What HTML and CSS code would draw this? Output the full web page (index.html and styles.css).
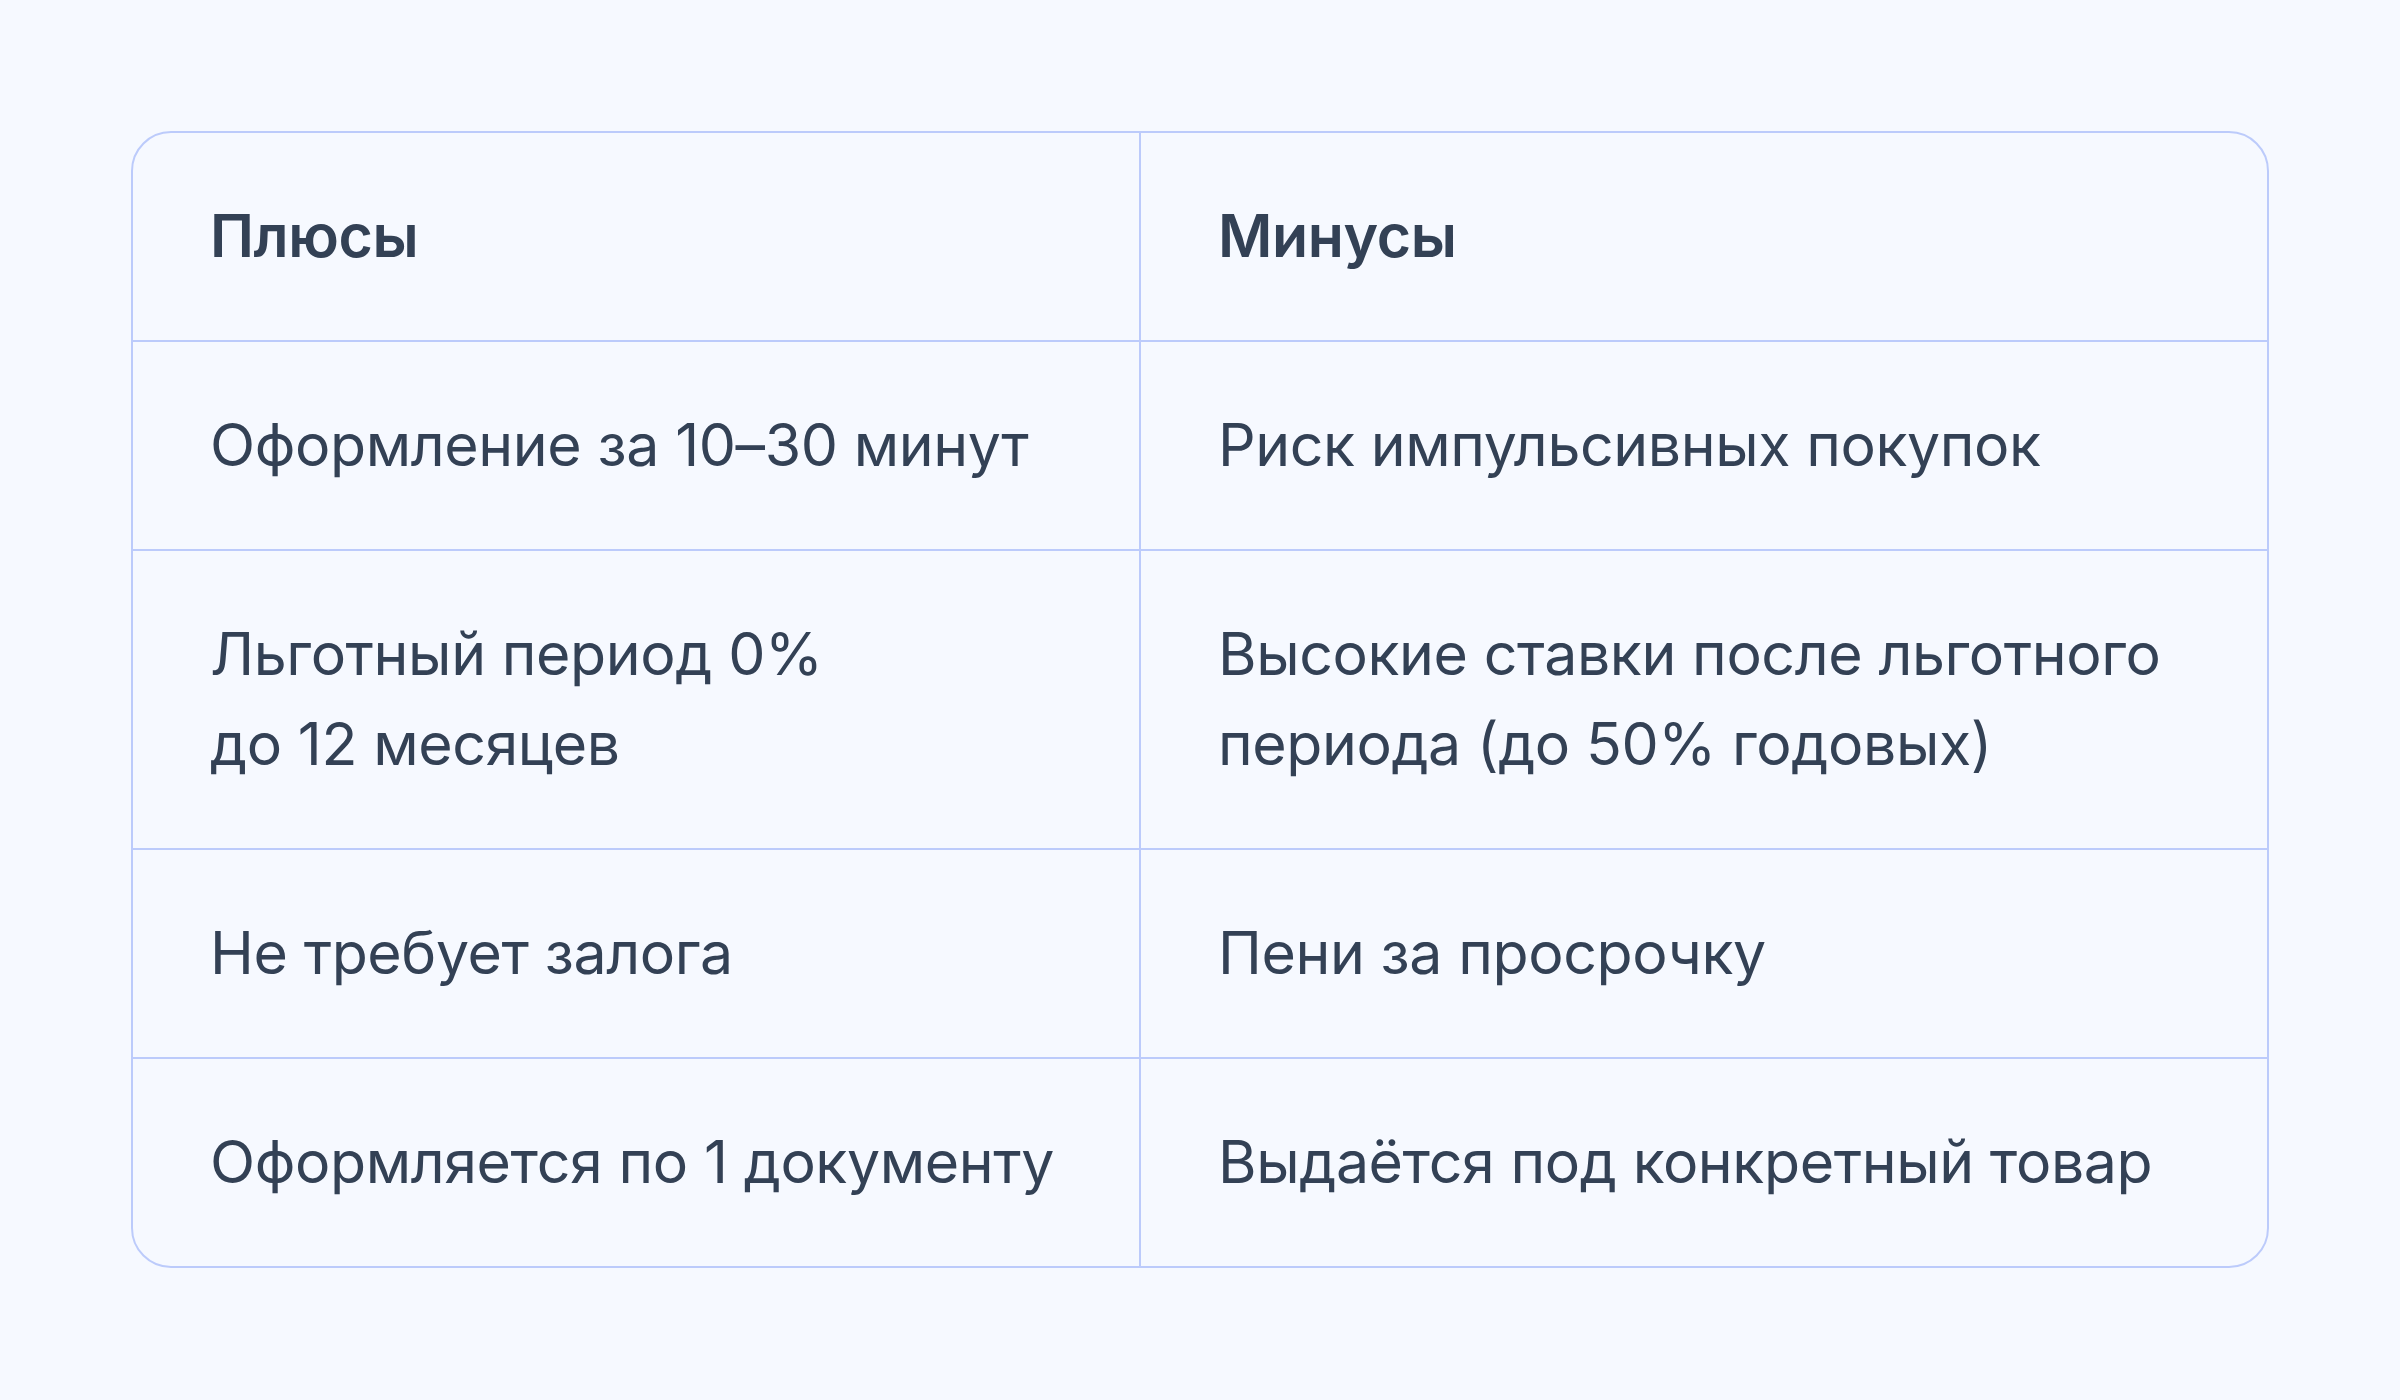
FILE: index.html
```html
<!DOCTYPE html>
<html lang="ru">
<head>
  <meta charset="UTF-8">
  <title>Плюсы и минусы</title>
  <link rel="stylesheet" href="styles.css">
</head>
<body>

  <!-- таблица сравнения -->
  <div class="compare">
    <table class="compare-table">
      <colgroup>
        <col class="col-pros">
        <col class="col-cons">
      </colgroup>
      <thead>
        <tr>
          <th>Плюсы</th>
          <th>Минусы</th>
        </tr>
      </thead>
      <tbody>
        <tr>
          <td>Оформление за 10–30 минут</td>
          <td>Риск импульсивных покупок</td>
        </tr>
        <tr>
          <td>Льготный период 0%<br>до 12 месяцев</td>
          <td>Высокие ставки после льготного<br>периода (до 50% годовых)</td>
        </tr>
        <tr>
          <td>Не требует залога</td>
          <td>Пени за просрочку</td>
        </tr>
        <tr>
          <td>Оформляется по 1 документу</td>
          <td>Выдаётся под конкретный товар</td>
        </tr>
      </tbody>
    </table>
  </div>

</body>
</html>
```

FILE: styles.css
```css
body {
  margin: 0;
  background: #f6f9ff;
  font-family: 'Inter', 'Noto Sans', sans-serif;
  color: #334155;
}

/* обёртка с рамкой */
.compare {
  margin: 131px 0 0 131px;
  width: 2138px;
  border: 2px solid #bccbfb;
  border-radius: 40px;
  overflow: hidden;
  box-sizing: border-box;
}

.compare-table {
  width: 100%;
  border-collapse: collapse;
  table-layout: fixed;
}

.col-pros { width: 1007px; }

.compare-table th,
.compare-table td {
  padding: 58px 30px 59px 77px;
  font-size: 59px;
  line-height: 90px;
  letter-spacing: -0.4px;
  text-align: left;
  vertical-align: top;
  white-space: nowrap;
  border: 2px solid #bccbfb;
}

.compare-table th {
  font-weight: 600;
}

.compare-table tr:first-child th,
.compare-table tr:first-child td { border-top: none; }
.compare-table tr:last-child td { border-bottom: none; }
.compare-table th:first-child,
.compare-table td:first-child { border-left: none; }
.compare-table th:last-child,
.compare-table td:last-child { border-right: none; }
```
